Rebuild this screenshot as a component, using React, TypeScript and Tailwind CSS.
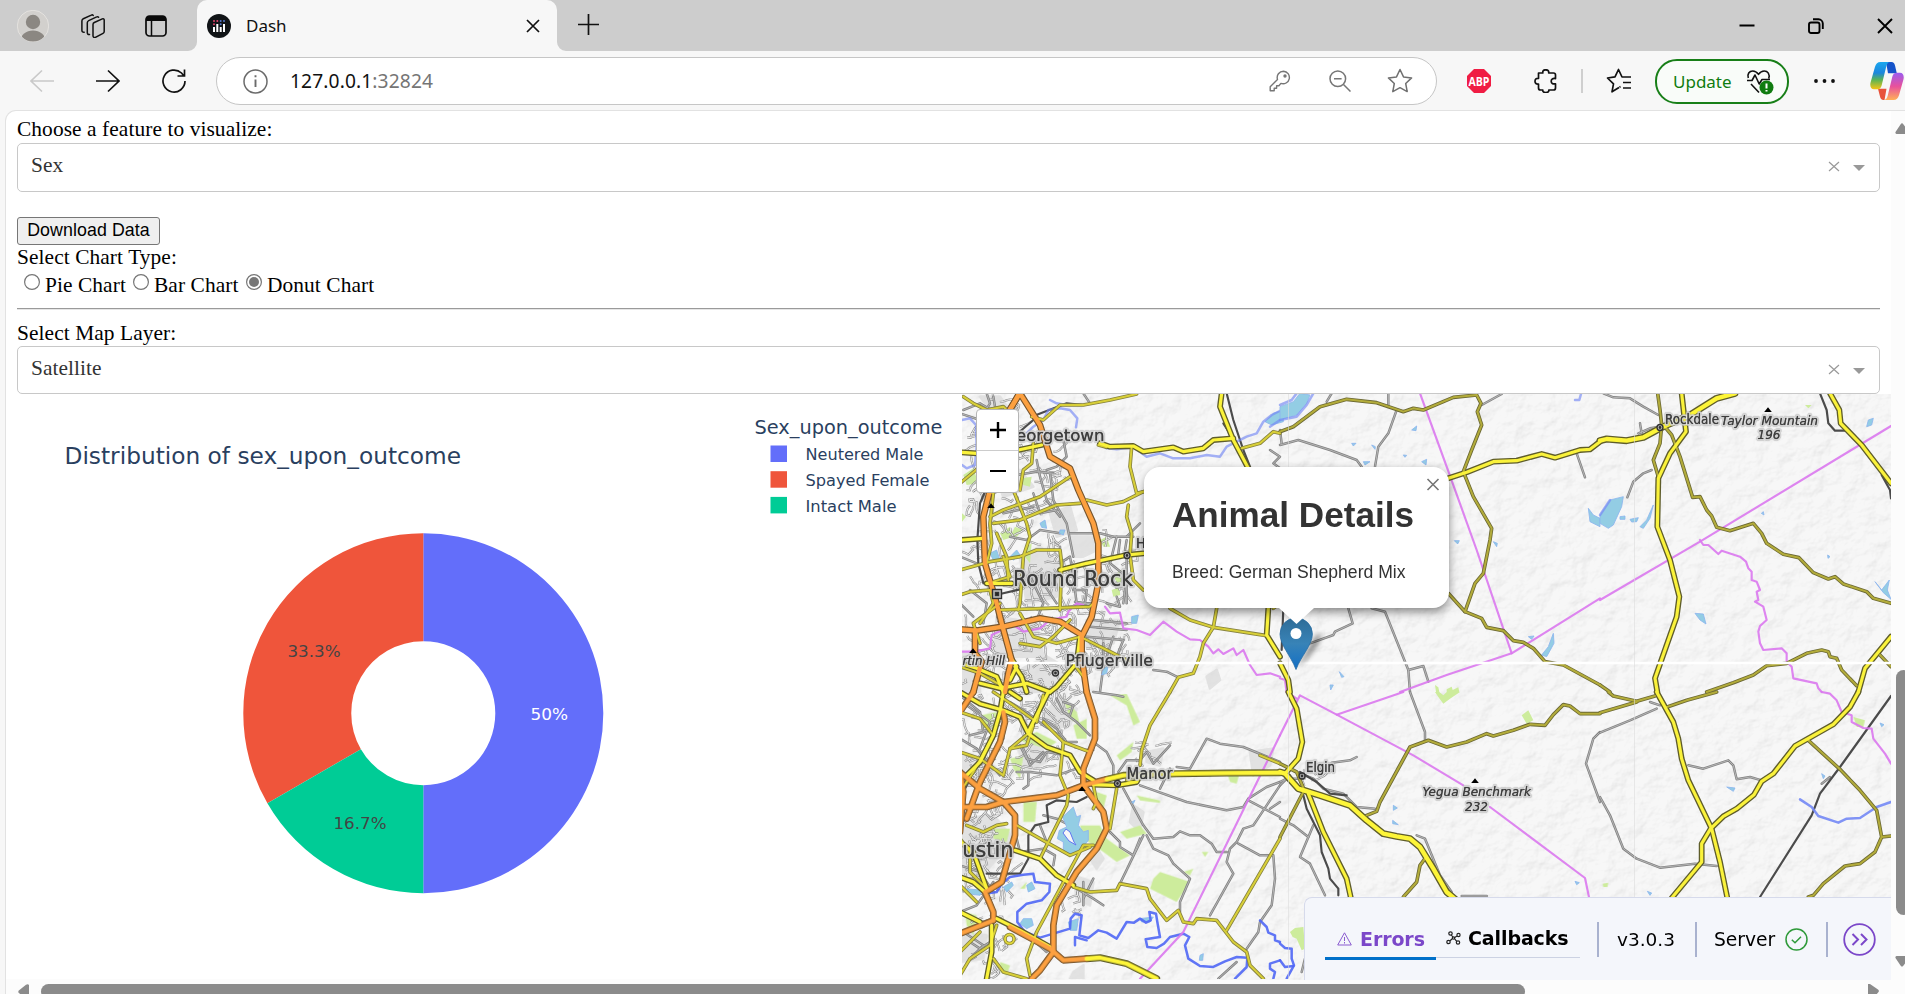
import React from "react";

const SERIF = "font-['Liberation_Serif',serif]";
const VERDANA = "'DejaVu Sans', sans-serif";

/* ---------- browser chrome ---------- */

function TabStrip() {
  return (
    <div className="flex h-[51px] shrink-0 items-center bg-[#cdcdcd]">
      <svg className="ml-[17px] h-8 w-8 shrink-0" viewBox="0 0 32 32">
        <defs>
          <clipPath id="avatar"><circle cx="16" cy="16" r="15.5" /></clipPath>
        </defs>
        <circle cx="16" cy="16" r="15.7" fill="#d2d0cd" stroke="#e4e2df" />
        <g clipPath="url(#avatar)" fill="#8b8782">
          <circle cx="16" cy="12" r="7.2" />
          <ellipse cx="16" cy="31" rx="12.5" ry="10.5" />
        </g>
      </svg>
      <svg className="ml-8 h-6 w-6 shrink-0" viewBox="0 0 24 24" fill="none" stroke="#111" strokeWidth="1.5" strokeLinecap="round" strokeLinejoin="round">
        <path d="M12 10.3c0-.9.5-1.6 1.3-2l8-3.6c1-.4 1.900.1 1.900 1.200v11.500c0 .8-.5 1.500-1.200 1.800l-7.600 4c-1.200.5-2.400-.2-2.400-1.300z" transform="translate(0 .2)" />
        <path d="M8.500 20.500c-1.500.2-2.200-.6-2.200-1.900V8.800c0-1 .5-1.800 1.400-2.200l8-3.700c.8-.4 1.500-.2 1.900.3" />
        <path d="M3.200 18.200C1.500 18.300.9 17.400.9 16.200V7c0-1 .5-1.800 1.400-2.200l8-3.700c.8-.4 1.500-.2 1.900.3" />
      </svg>
      <svg className="ml-10 h-[22px] w-[22px] shrink-0" viewBox="0 0 22 22">
        <rect x="1" y="1" width="20" height="20" rx="3.500" fill="none" stroke="#0a0a0a" strokeWidth="1.700" />
        <path d="M1 6V4a3 3 0 0 1 3-3h14a3 3 0 0 1 3 3v2z" fill="#0a0a0a" />
        <path d="M6.500 5v16" stroke="#0a0a0a" strokeWidth="1.500" />
      </svg>
      <div className="relative ml-[30px] flex h-[51px] w-[360px] shrink-0 items-center rounded-t-[10px] bg-[#f7f7f7]">
        <svg className="absolute bottom-0 -left-[9px] h-[9px] w-[9px]" viewBox="0 0 9 9"><path d="M9 0A9 9 0 0 1 0 9H9z" fill="#f7f7f7" /></svg>
        <svg className="absolute -right-[9px] bottom-0 h-[9px] w-[9px]" viewBox="0 0 9 9"><path d="M0 0A9 9 0 0 0 9 9H0z" fill="#f7f7f7" /></svg>
        <svg className="ml-[10px] h-6 w-6" viewBox="0 0 24 24">
          <circle cx="12" cy="12" r="12" fill="#111417" />
          <g fill="#fff">
            <rect x="6" y="13" width="2" height="5" /><rect x="9.300" y="10" width="2" height="8" />
            <rect x="12.700" y="13" width="2" height="5" /><rect x="16" y="10" width="2" height="8" />
          </g>
          <g fill="#e5446d"><circle cx="7" cy="7" r="1" /><circle cx="7" cy="10.200" r="1" /><circle cx="10.300" cy="7" r="1" /></g>
          <g fill="#5577c9"><circle cx="13.700" cy="7" r="1" /><circle cx="13.700" cy="10.200" r="1" /><circle cx="17" cy="7" r="1" /></g>
        </svg>
        <span className="ml-[15px] font-['Noto_Sans',sans-serif] text-[17px] text-[#111]">Dash</span>
        <svg className="mr-[17px] ml-auto h-[14px] w-[14px]" viewBox="0 0 14 14" stroke="#111" strokeWidth="1.700"><path d="M1 1l12 12M13 1L1 13" /></svg>
      </div>
      <svg className="-mt-[2px] ml-[21px] h-[21px] w-[21px]" viewBox="0 0 21 21" stroke="#111" strokeWidth="1.700"><path d="M10.500 0v21M0 10.500h21" /></svg>
      <div className="mr-[12px] ml-auto flex items-center gap-[53px]">
        <svg className="h-4 w-4" viewBox="0 0 16 16"><path d="M.5 7.500h15" stroke="#000" strokeWidth="2" /></svg>
        <svg className="h-4 w-4" viewBox="0 0 16 16" fill="none" stroke="#000" strokeWidth="1.900"><rect x="1" y="4.500" width="10.500" height="10.500" rx="2" /><path d="M5 1.300h5.500a4.300 4.300 0 0 1 4.300 4.300V11" /></svg>
        <svg className="h-4 w-4" viewBox="0 0 16 16" stroke="#000" strokeWidth="1.900"><path d="M1 1l14 14M15 1L1 15" /></svg>
      </div>
    </div>
  );
}

function Toolbar() {
  return (
    <div className="flex h-[60px] shrink-0 items-center bg-[#f7f7f7]">
      <svg className="ml-[30px] h-6 w-6 shrink-0" viewBox="0 0 24 24" fill="none" stroke="#c9c9c9" strokeWidth="1.600"><path d="M24 12H1M12 1.500L1 12l11 10.500" /></svg>
      <svg className="ml-[42px] h-6 w-6 shrink-0" viewBox="0 0 24 24" fill="none" stroke="#111" strokeWidth="1.700"><path d="M0 12h23M12 1.500L23 12 12 22.500" /></svg>
      <svg className="ml-[42px] h-6 w-6 shrink-0" viewBox="0 0 24 24" fill="none" stroke="#111" strokeWidth="1.700"><path d="M23 12A11 11 0 1 1 19.500 4l2.500 3M22.500.5V7H15.500" /></svg>
      <div className="ml-[30px] flex h-12 w-[1221px] shrink-0 items-center rounded-full border border-[#c6c6c6] bg-white">
        <svg className="ml-[26px] h-[25px] w-[25px]" viewBox="0 0 25 25" fill="none" stroke="#6b6b6b" strokeWidth="1.500"><circle cx="12.500" cy="12.500" r="11.500" /><path d="M12.500 10.500V18M12.500 6.300v2" strokeWidth="1.900" /></svg>
        <div className="mt-[1px] ml-[22px] font-['Noto_Sans',sans-serif] text-[19.200px] tracking-[0.120px] text-[#757575]"><span className="text-[#111]">127.0.0.1</span>:32824</div>
        <svg className="mr-[38px] ml-auto h-[22px] w-[22px]" viewBox="0 0 22 22" fill="none" stroke="#767676" strokeWidth="1.400" strokeLinejoin="round"><path d="M14.500 1.200a6.300 6.300 0 0 0-6 8.200L1.200 16.700v4.100h4v-2.500h2.400v-2.500h2.300l2-2.400a6.300 6.300 0 1 0 2.600-12.200z" /><circle cx="16" cy="6" r="1" fill="#767676" /></svg>
        <svg className="mr-[36px] h-[22px] w-[22px]" viewBox="0 0 22 22" fill="none" stroke="#767676" strokeWidth="1.500"><circle cx="8.800" cy="8.800" r="7.800" /><path d="M14.500 14.500l7 7M5 8.800h7.600" /></svg>
        <svg className="mr-[23px] h-[26px] w-[26px]" viewBox="0 0 26 26" fill="none" stroke="#707070" strokeWidth="1.500" strokeLinejoin="round"><path d="M13 1.500l3.500 7.400 8.100 1-5.900 5.600 1.500 8.100L13 19.700l-7.200 3.900 1.500-8.100L1.400 9.900l8.100-1z" /></svg>
      </div>
      <svg className="ml-[30px] h-6 w-6 shrink-0" viewBox="0 0 24 24"><path d="M7 0h10l7 7v10l-7 7H7l-7-7V7z" fill="#f01d44" /><text x="12" y="16.500" fontSize="12.500" fontWeight="700" fill="#fff" textAnchor="middle" textLength="21" lengthAdjust="spacingAndGlyphs" fontFamily="Open Sans, sans-serif">ABP</text></svg>
      <svg className="ml-[43px] h-6 w-6 shrink-0" viewBox="0 0 24 24" fill="none" stroke="#111" strokeWidth="1.700" strokeLinejoin="round"><path d="M4.500 4h4.300c-.3-2 .7-3.200 2.900-3.200S15 2 14.700 4h4.800a2 2 0 0 1 2 2v3.600c-2.800-.5-4.300.5-4.300 2.600s1.500 3.100 4.300 2.600V19a2 2 0 0 1-2 2h-4.700c.2 1.700-.9 2.600-3 2.600S8.600 22.700 8.800 21H6.500a2 2 0 0 1-2-2v-4C2.300 15.300 1 14.300 1 12.200s1.300-3.100 3.500-2.800z" /></svg>
      <div className="ml-[23px] h-6 w-[2px] bg-[#cfcfcf]" />
      <svg className="ml-[23px] h-[26px] w-[26px] shrink-0" viewBox="0 0 26 26" fill="none" stroke="#111" strokeWidth="1.700" strokeLinejoin="round"><path d="M13 19.500l-7 4.300 1.500-8L1.500 10l7.500-1.200L12.500 1.500 16 9h9M17 14.500h8M17 20h8M13.500 19.200l1-.6" /></svg>
      <div className="mt-[1px] ml-[23px] flex h-[45px] w-[134px] shrink-0 items-center rounded-[22px] border-2 border-[#187f18] bg-[#f9fcf9]">
        <span className="ml-4 w-[58px] font-['Noto_Sans',sans-serif] text-[17px] text-[#107c10]">Update</span>
        <svg className="ml-[15px] h-[26px] w-[28px] shrink-0" viewBox="0 0 28 26" fill="none" stroke="#111" strokeWidth="1.600" strokeLinejoin="round"><path d="M2.300 9C1 5 3.200 2 6.800 2c2.800 0 4.300 1.500 5.700 3.400C13.900 3.500 15.400 2 18.200 2c3.600 0 5.900 3 4.500 7.500M1 11.500h5l3-5.500 4.200 9 2.800-4.500h8M5 15l8 8.500" /><circle cx="20.500" cy="18.500" r="7" fill="#107c10" stroke="none" /><path d="M20.500 14.500v5M20.500 21v1.600" stroke="#fff" strokeWidth="2" /></svg>
      </div>
      <svg className="ml-6 h-[6px] w-[23px] shrink-0" viewBox="0 0 23 6" fill="#111"><circle cx="3" cy="3" r="1.900" /><circle cx="11.500" cy="3" r="1.900" /><circle cx="20" cy="3" r="1.900" /></svg>
      <svg className="ml-[34px] h-[38px] w-[34px] shrink-0" viewBox="0 0 34 32" preserveAspectRatio="none">
        <defs>
          <linearGradient id="cpA" x1="0" y1="0" x2="0" y2="1"><stop offset="0" stopColor="#1aa7ee" /><stop offset=".4" stopColor="#1b86dd" /><stop offset=".65" stopColor="#59b455" /><stop offset="1" stopColor="#f7c414" /></linearGradient>
          <linearGradient id="cpB" x1="0" y1="0" x2="0" y2="1"><stop offset="0" stopColor="#9a5cf0" /><stop offset=".5" stopColor="#e8519c" /><stop offset="1" stopColor="#ffb057" /></linearGradient>
        </defs>
        <path d="M16 0h5.500c2 0 3 1.200 3.500 3l1.800 6.500H18z" fill="#1553c9" />
        <path d="M8 22.500h8.500l-2 9.500h-1c-2 0-3-1.200-3.500-3z" fill="#e8533b" />
        <path d="M10.500 0H20c-2 0-3 1.500-3.700 3.500l-4.600 16c-.7 2.300-2 3.500-4.500 3.500H4C1 23-.3 20.500.5 17.500L5 4C6 1.300 7.500 0 10.500 0z" fill="url(#cpA)" />
        <path d="M23.500 32H14c2 0 3-1.500 3.700-3.500l4.600-16C23 10.200 24.300 9 26.800 9H30c3 0 4.300 2.500 3.500 5.500L29 28c-1 2.700-2.500 4-5.500 4z" fill="url(#cpB)" />
      </svg>
    </div>
  );
}

/* ---------- form controls ---------- */

function Dropdown({ value, tall }: { value: string; tall?: boolean }) {
  return (
    <div className={`flex w-[1863px] items-start rounded-[5px] border border-[#c8c8c8] bg-white ${tall ? "h-[49px]" : "h-12"}`}>
      <span className="mt-[9px] ml-[13px] text-[21.400px] leading-6 tracking-[0.050px] text-[#333]">{value}</span>
      <svg className="mt-[17px] mr-[13px] ml-auto h-3 w-3" viewBox="0 0 12 12" stroke="#999" strokeWidth="1.200"><path d="M1 1l10 9M11 1l-10 9" /></svg>
      <svg className="mt-[21px] mr-[14px] h-[6px] w-3" viewBox="0 0 12 6"><path d="M0 0h12L6 6z" fill="#999" /></svg>
    </div>
  );
}

function Radio({ label, checked }: { label: string; checked?: boolean }) {
  return (
    <label className="flex items-start">
      <svg className="mt-[1px] mr-[5px] h-4 w-4" viewBox="0 0 16 16"><circle cx="8" cy="8" r="7.400" fill="#fff" stroke="#767676" strokeWidth="1.200" />{checked && <circle cx="8" cy="8" r="5" fill="#767676" />}</svg>
      {label}
    </label>
  );
}

/* ---------- donut chart ---------- */

function Chart() {
  const legend = [
    { name: "Neutered Male", fill: "#636efa", w: 118 },
    { name: "Spayed Female", fill: "#ef553b", w: 124 },
    { name: "Intact Male", fill: "#00cc96", w: 91 },
  ];
  return (
    <svg className="h-[585px] w-[945px] shrink-0" viewBox="17 394 945 585" fontFamily={VERDANA}>
      <text x="64.500" y="463.500" fontSize="22.700" fill="#2a3f5f" textLength="396.500" lengthAdjust="spacingAndGlyphs">Distribution of sex_upon_outcome</text>
      <text x="754.500" y="433.500" fontSize="18.700" fill="#2a3f5f" textLength="188" lengthAdjust="spacingAndGlyphs">Sex_upon_outcome</text>
      {legend.map((l, i) => (
        <g key={l.name}>
          <rect x="770.500" y={445.5 + i * 25.7} width="16.500" height="16.500" fill={l.fill} />
          <text x="805.500" y={460 + i * 25.8} fontSize="16" fill="#2a3f5f" textLength={l.w} lengthAdjust="spacingAndGlyphs">{l.name}</text>
        </g>
      ))}
      <path d="M423.300 533.200A180 180 0 0 1 423.300 893.200V785.200A72 72 0 0 0 423.300 641.200z" fill="#636efa" />
      <path d="M423.300 533.200A180 180 0 0 0 267.400 803.200L360.900 749.200A72 72 0 0 1 423.300 641.200z" fill="#ef553b" />
      <path d="M267.400 803.200A180 180 0 0 0 423.300 893.200V785.200A72 72 0 0 1 360.900 749.200z" fill="#00cc96" />
      <g fontSize="16">
        <text x="287.500" y="656.500" fill="#444" textLength="53" lengthAdjust="spacingAndGlyphs">33.3%</text>
        <text x="333.500" y="828.500" fill="#444" textLength="53" lengthAdjust="spacingAndGlyphs">16.7%</text>
        <text x="530.500" y="720" fill="#fff" textLength="37.500" lengthAdjust="spacingAndGlyphs">50%</text>
      </g>
    </svg>
  );
}

/* ---------- map ---------- */

type Sheet = { at: [number, number]; green?: string[]; urban?: string[]; water?: string[]; river?: string[]; border?: string[]; street?: string[]; rail?: string[]; olive?: string[]; yellow?: string[]; trunk?: string[]; orange?: string[] };

/* Each sheet covers a 320x302 part of the map, drawn in thirds of a pixel. */
const SHEETS: Sheet[] = [
  {
    at: [960, 390],
    urban: ["180,500 240,470 300,520 290,620 200,640", "330,440 400,440 410,480 370,500 340,500", "100,240 180,240 220,290 130,320", "110,680 230,700 250,800 100,800", "60,20 120,20 170,90 100,70", "380,690 480,690 460,760 380,770", "180,840 260,800 330,840 250,906 180,906", "10,790 60,790 60,906 10,906", "740,860 770,840 780,870 750,895", "270,370 330,350 350,420 290,440"],
    green: ["10,255 40,235 55,280 20,285", "185,265 215,260 210,290 190,285", "120,430 150,410 160,440 130,450", "200,470 215,460 210,520 195,500", "150,440 165,410 190,420 170,440", "460,560 480,540 500,550 480,590", "6,370 18,380 6,395", "320,800 350,815 330,830", "420,450 440,440 450,470 430,470", "455,600 480,590 480,615 460,620"],
    water: ["90,490 110,480 120,510 100,510", "240,400 255,390 260,415 245,412", "915,95 940,70 970,60 970,95 935,105", "515,680 535,675 530,700 515,700", "430,840 445,825 440,850 425,855", "150,500 170,480 180,495 160,510", "300,420 315,420 310,435 298,430"],
    river: ["6,90 30,85 48,105 50,170 45,225 20,235 6,225", "180,150 220,110 250,90 265,60 300,55 330,60 352,85 348,112", "270,30 290,40 320,45", "415,160 440,175 470,178 520,172 560,200 600,190 640,205 690,205 740,195 780,200 800,170 860,140 890,130 910,95 935,75 965,60", "930,110 960,90"],
    border: ["0,785 45,785 90,775 95,735 160,705 190,725 240,715 270,690 320,680 325,665 350,640 370,645", "435,650 450,670 480,668 490,715 530,720 570,735 610,695 650,725 690,748 720,750 745,770 760,790 775,778 790,792 820,775 830,795 850,780 870,825 890,855 930,850 960,860"],
    rail: ["220,90 150,150 90,270 60,340 52,450 55,520 70,580", "800,10 820,90 850,180 872,235", "215,80 320,40 370,45", "790,100 835,170", "120,612 180,598"],
    street: ["0,70 60,90 90,40 80,10", "10,60 60,40 110,70 160,60", "100,20 110,80 150,100", "370,10 390,40", "310,150 320,200 290,230 260,240", "230,210 240,260 260,330 300,380", "270,250 280,330 320,400 340,500", "330,430 420,430 460,440 520,440", "300,470 300,520 330,500 340,560", "470,440 450,520 500,560 490,640", "500,500 500,640", "930,180 960,200 940,220 960,235", "390,710 500,720", "380,740 490,750 470,800", "400,690 500,700", "430,760 430,850", "460,740 430,830 420,906", "580,840 620,845 650,860", "0,500 50,520", "30,600 80,640 70,700", "0,640 40,680", "210,560 250,640 230,690", "250,580 290,640", "340,560 350,640 400,640", "540,400 500,440", "150,440 200,450 240,420 300,430", "220,310 240,370 290,360", "480,450 475,490", "500,450 495,480", "340,600 380,600 375,640 345,635", "440,640 480,650 470,620", "100,250 170,255 230,245 280,250", "130,370 220,350"],
    olive: ["10,20 40,40 80,60 130,50 160,80", "215,80 250,90 300,45 370,45 450,30 530,12", "415,165 440,172", "515,170 510,230 530,310 550,305", "380,330 440,345 490,335 550,305", "505,345 500,380 515,430 510,495", "510,495 520,570 550,600", "630,655 690,690 760,712 920,737", "770,655 760,712 730,760 720,800 700,850 655,862 630,906", "845,175 900,160 940,125 960,130", "90,380 130,360 240,320 330,260", "100,400 180,390 290,345 360,340", "60,290 100,310 90,400 95,460 80,520", "160,300 200,400 210,440 190,500 180,640 175,660", "220,160 215,220 190,240 180,300", "0,540 90,515 180,500 230,480 300,480 305,520 300,660", "120,660 260,655 390,650 400,640", "60,700 100,640 90,600 30,605 0,615", "180,670 220,740 290,760 360,740 440,780 520,820", "180,760 240,770 280,740 330,690", "940,655 960,640", "0,830 60,850 130,890", "60,760 40,700 120,640", "130,500 150,560 100,575", "340,820 370,860", "110,430 140,500 145,570", "0,280 60,230 130,160"],
    yellow: ["6,187 50,190", "175,180 245,165", "6,450 70,445", "300,540 380,520 500,495 550,490", "80,580 155,580", "360,740 350,820 290,890 270,906", "0,820 50,835 110,860 130,906", "165,830 185,860 200,906", "925,655 920,735 960,800", "785,10 780,50 820,150 865,235", "820,145 760,150 730,175 670,185 640,172 550,185 520,168 450,170 420,160", "150,800 170,830 150,870", "60,880 120,895 200,880 270,906"],
    orange: ["145,65 180,10 240,105 270,200 330,235 355,300 400,400 415,460 415,580 395,680 365,740 365,800 380,906", "150,60 175,15", "90,300 70,380 75,520 110,640 125,700 155,810 145,850 135,906", "0,718 50,722 130,710 240,685 300,695 365,735", "45,720 45,790 65,815 40,906"],
  },
  {
    at: [960, 692],
    urban: ["170,160 240,150 260,210 200,240", "0,180 80,200 120,240 60,260 0,230", "560,180 610,170 600,220 560,210", "0,380 100,370 160,440 60,560 0,540", "340,550 400,570 390,640 350,620", "520,340 550,360 540,420 510,390", "400,450 430,500 410,530 390,500", "870,180 940,170 930,220 880,250", "250,70 300,10 350,50 330,100 280,110", "340,840 370,820 370,860 330,860", "0,720 80,730 70,800 0,810"],
    green: ["450,10 500,5 540,90 520,100 500,40", "470,190 520,150 515,180 480,205", "180,140 230,120 290,150 260,170 190,150", "360,400 420,400 440,440 510,490 470,510 430,480 370,440", "480,420 540,400 560,425 500,440", "580,560 600,540 690,570 650,630 570,590", "190,330 230,330 225,390 190,390", "60,70 110,60 100,130 70,110", "530,310 600,325 600,333 540,325", "100,410 150,410 140,450 100,440", "340,100 380,80 380,140 350,140", "800,240 840,240 830,275 810,270", "725,480 745,480 735,495", "410,300 440,310 430,350 410,330", "150,200 190,190 180,260 160,230", "310,20 350,60 360,100 330,80", "15,660 50,670 40,730 20,700", "180,590 200,570 195,590", "670,540 700,530 690,550", "120,810 150,820 140,850 120,840"],
    water: ["340,345 350,375 362,370 355,400 370,420 385,415 385,445 365,470 335,490 310,475 310,450 292,440 298,415 320,405 308,375", "190,680 215,680 220,700 200,710 180,695", "130,585 155,570 160,580 140,600", "200,580 215,570 225,590 205,600", "325,690 355,680 350,715 330,715", "540,680 580,675 570,690 545,690", "15,590 70,595 60,610 20,605", "720,790 730,785 728,805 718,805", "515,330 525,325 520,335"],
    river: ["75,605 110,600 125,575 150,555 190,548 220,545 225,570 270,575 268,600 245,625 200,635 172,660 172,690 195,720 240,737 330,710 332,680 345,665 365,670 362,695 358,730 385,738 415,715 440,722 470,740 500,690 522,692 540,680 558,692 572,685 568,660 588,665 592,690 600,735 580,738 557,742 562,765 590,768 612,755 630,735 670,725 688,735 675,760 685,800 720,822 760,825 795,808 830,795 862,797 860,825 825,860", "345,760 345,735 380,745", "900,685 920,705 925,722 945,730 945,745 960,750", "960,805 930,815 930,830 945,840 940,860"],
    border: ["960,130 670,720 540,860"],
    rail: ["80,545 180,545 205,500 205,430 225,400 265,390 260,340 290,325 350,330 380,315", "0,240 30,260 10,300"],
    street: ["0,10 60,60 70,120 30,130", "20,40 90,90 60,170", "150,30 200,60 250,100 300,130", "250,80 290,110 320,150 350,150", "180,160 200,200 240,210 260,180 320,190", "190,170 210,220 250,180", "170,240 210,240 290,250 350,230", "205,245 205,280 190,290", "290,20 310,60 350,90 390,130", "310,30 340,40 330,70 310,60", "400,150 440,180 460,220 460,250", "400,0 470,10 490,14", "475,240 500,205 540,205 560,180 580,215 630,160", "650,225 690,230 740,140 780,155 850,165 960,210", "540,280 680,330 800,355 850,345 865,320 920,285 960,270", "490,290 550,400 580,440 640,435 660,418 690,430 720,430 755,455 770,480 800,480", "480,575 550,430", "560,430 580,470 625,490 640,515 690,560 660,630 660,660", "750,670 820,545 800,510 810,470 830,450 850,410 880,400 960,280", "865,325 960,375", "835,455 900,490 940,490 945,560 935,640 900,690 895,720 860,770", "775,860 830,810", "450,420 480,450 480,465 520,490 540,440", "350,590 400,620 430,640", "370,570 370,640", "400,560 370,620", "170,440 180,480 250,470 285,490 280,520", "250,370 290,380 330,400", "240,400 260,450", "0,140 50,170 120,250", "0,660 50,640 100,570", "10,720 70,760 30,800", "600,290 630,230", "0,520 60,540 100,600", "220,745 260,780", "30,750 60,770 90,750", "930,350 960,330"],
    olive: ["630,0 570,100 545,175 540,220", "470,290 450,410", "0,60 60,80 100,130 40,240 0,300", "0,180 60,200 130,250 150,170 210,120", "150,170 200,160 220,100", "250,90 310,150 390,180", "310,150 300,250 325,310 320,340 240,500", "100,0 160,40 230,90 250,10", "170,400 240,440 330,490 390,465", "400,460 370,460 230,720 200,800 210,850", "340,585 390,600 470,595 480,575 560,590 570,620 620,685 655,655 670,690 700,695 710,680 770,685 820,750 860,780 870,820 910,860", "800,715 960,440", "900,190 960,215", "0,850 30,800 90,760 110,700", "100,800 130,840 200,860", "400,280 410,330 400,350", "20,400 70,420 110,400 140,395", "0,580 50,630", "0,440 30,480 30,540 80,590", "60,720 0,780", "500,265 520,270"],
    yellow: ["0,0 60,35 130,55 180,75 205,125 260,165 330,190 360,240 400,265", "130,0 120,60 100,130 60,210 20,250", "205,120 265,0", "400,278 470,280 530,270 540,250", "165,475 240,500 290,550 340,580", "0,660 60,690", "110,680 180,715 270,765", "0,450 40,480 80,590", "0,555 40,570 75,600", "95,700 95,780 80,860", "150,0 180,20"],
    trunk: ["440,262 490,250 650,245 800,243 960,242", "380,800 420,797 500,815 590,860"],
    orange: ["40,0 0,60", "0,240 60,290 130,330 165,370 165,430 145,500 125,570 85,595", "0,345 80,345 130,330 290,310 370,280 440,262", "380,0 405,80 405,140 370,230 370,280 430,360 440,410 410,470 350,540 290,640 280,700 280,780", "280,780 240,835 215,860", "130,60 135,90 120,150 60,270 20,380", "75,600 100,660 100,685", "0,725 100,685", "150,705 270,770 310,805 380,800", "0,240 10,300 0,420"],
  },
  {
    at: [1280, 390],
    water: ["0,50 40,35 60,10 90,15 80,40 50,75 0,90", "925,355 940,375 960,385 960,410 930,395", "395,120 410,108 408,122", "425,215 440,208 438,225", "820,730 822,760 800,800 785,795 805,770", "523,452 538,452 533,462", "640,455 652,460 650,470", "215,160 228,160 220,168", "250,215 270,215 255,225", "745,740 762,738 755,748", "178,845 192,860 185,862", "150,885 160,885 152,900", "370,195 380,196 375,202", "275,165 286,170 285,178"],
    green: ["465,885 475,892 478,906 468,906", "500,898 515,890 518,900 535,892 538,906 500,906", "395,890 410,882"],
    river: ["0,45 35,30 50,10", "0,90 50,80 80,45 100,10", "885,30 898,30 903,12"],
    border: ["420,10 500,230 590,480 695,790 960,625", "695,790 500,855 360,906", "0,865 15,870 20,906"],
    rail: ["10,655 5,780"],
    street: ["0,165 55,150 150,180 230,210 245,230", "350,60 325,130 295,170 285,230", "325,10 325,45", "140,35 155,10", "605,45 665,12", "890,190 915,262", "205,655 218,700 165,725 160,735 90,760", "275,655 315,665 385,840 390,906", "385,840 430,828 445,875", "0,120 5,160"],
    olive: ["0,125 40,110 120,50 200,28 290,38 370,65 400,55 430,60 520,22 590,15 603,40 592,65 605,105 575,180 550,245 580,320 635,415 630,450 610,550 585,580 555,665", "505,610 555,665 605,685 620,712 670,722 700,752 730,757 760,775 795,815 850,825 960,885"],
    yellow: ["505,265 560,247 640,215 710,212 785,192 825,203 900,180 930,178 960,155", "0,820 25,870 30,906"],
  },
  {
    at: [1280, 692],
    water: ["340,340 352,348 340,355", "338,385 355,398 338,395", "885,568 898,572 890,578"],
    green: ["465,0 478,0 490,10 500,0 540,0 510,20 490,35 475,15", "725,70 745,55 760,85 740,95", "30,720 45,708 70,705 75,770 65,775 50,740 38,735"],
    river: ["0,755 15,768 35,770 35,800 42,820 20,860", "0,805 15,825 40,822"],
    border: ["0,130 60,10 170,68 400,190 550,280", "170,68 370,0", "630,345 915,558 928,620", "20,0 50,20"],
    rail: ["70,310 80,350 120,430 125,480 145,530 150,560 175,590 175,610", "60,240 110,270 150,305 200,310"],
    street: ["390,0 435,120 435,145", "155,212 210,205 230,195", "0,380 40,400 85,435", "100,400 60,495 90,515 135,610", "960,120 940,140 918,215 960,330", "50,240 100,260 130,290 190,305 230,345 285,350", "410,430 435,440 480,550 515,600", "0,280 30,250", "0,270 20,260 70,260", "545,612 620,612", "75,800 65,840"],
    olive: ["260,370 290,358 300,330 390,165 445,145 500,165 560,150 620,125 640,132 700,115 750,97 795,100 820,68 850,38 870,42 900,65 960,65", "70,300 0,435", "435,500 420,520 410,570 370,615", "0,215 50,240 75,300"],
    yellow: ["25,0 50,50 67,150 55,200 15,245", "85,305 130,420 200,560 212,615"],
    trunk: ["0,240 15,245 55,290 120,310 210,340 260,385 310,425 350,433 390,440 420,465 460,530 500,600 530,625"],
  },
  {
    at: [1600, 390],
    water: ["30,330 70,320 65,350 40,405 25,415 0,400 0,375", "160,345 150,385 130,415 120,410 140,390", "60,380 75,378 75,388 60,388", "90,388 115,383 110,395 95,396", "800,110 805,90 820,85 815,105", "285,670 310,672 318,702 300,690", "825,575 845,600 868,570 862,600 873,628 850,608", "490,365 492,375 484,370", "683,495 690,500 684,505"],
    river: ["0,375 30,330"],
    green: ["615,45 635,45 625,55"],
    border: ["0,630 300,455 873,108", "300,450 310,465 325,465 355,492 365,482 420,500 438,515 445,535 455,545 455,570 470,575 480,600 470,605 475,630 465,635 490,650 500,690 480,708 475,725 480,760 490,780 545,775 560,790 560,815 575,830 580,865 650,880 655,895 665,906"],
    rail: ["660,10 680,60 685,100 705,122 735,122", "845,255 870,300 873,325"],
    street: ["10,10 40,22 90,25 130,50 175,75", "82,322 100,275 130,250 155,240", "115,130 150,115 180,110", "120,100 125,130"],
    olive: ["173,10 180,60 185,105 180,160 160,210 175,260", "190,105 215,135 240,200 278,322 300,320 320,360 335,378 350,412 390,422 460,400 485,430 500,460 550,493 597,503 640,548 685,567 705,560 730,582 800,605 820,625 873,640", "320,906 400,878 460,855 500,827 560,820 620,790 665,780 685,785 690,800 710,805 725,840 770,887", "0,885 30,906", "840,795 873,830"],
    yellow: ["245,10 258,125 210,190 175,265 172,410 210,510 238,620 230,680 165,865 172,906", "690,10 718,60 722,100 785,165 873,280", "873,740 795,835 775,906"],
    trunk: ["0,152 20,147 80,152 130,142 190,110 270,75 350,25 405,10"],
  },
  {
    at: [1600, 692],
    water: ["380,285 405,288 400,298", "665,245 675,252 670,260", "840,93 852,98 845,104", "142,598 155,603 150,610"],
    green: ["8,575 25,572 22,585 10,585", "760,75 795,85 790,105 770,105"],
    river: ["600,322 635,345 655,372 715,392 740,380 780,378 830,345 873,330"],
    border: ["665,0 690,5 710,25 725,60 755,70 755,90 790,108 815,110 820,140 855,185 873,215"],
    rail: ["873,12 720,225 660,305 635,370 480,615"],
    street: ["0,122 90,85 170,50", "265,220 310,230 385,205 400,220 410,262 450,255 485,265", "0,315 30,370 70,470 110,500 180,527 285,515 350,522", "150,30 180,40", "665,275 690,255"],
    olive: ["25,0 40,12 110,28 165,12", "0,62 110,30", "195,47 260,25 350,0", "625,145 720,232 780,295 830,355 845,435 825,480 780,515 735,522 670,575 640,610 625,615", "845,435 873,432"],
    yellow: ["170,0 220,90 235,140 245,200 265,265 335,410 360,510 382,618", "775,0 750,45 700,97 585,162 520,245 485,268 462,308 410,350 370,373 332,410 305,455 305,510 215,618"],
  },
];

function Lines({ d, color, width, opacity }: { d?: string[]; color: string; width: number; opacity?: number }) {
  return <>{(d ?? []).map((p, i) => <polyline key={i} points={p} fill="none" stroke={color} strokeWidth={width} strokeLinejoin="round" strokeLinecap="round" opacity={opacity} />)}</>;
}

/* Fine residential street mesh inside the built-up west side. */
function cityStreets(): string[] {
  let s = 7;
  const rnd = () => ((s = (s * 16807) % 2147483647) / 2147483647);
  const zones: [number, number, number, number, number][] = [
    [964, 396, 60, 60, 24], [985, 450, 80, 130, 60], [964, 470, 22, 110, 12], [985, 570, 100, 50, 46], [1085, 615, 40, 55, 24],
    [964, 620, 110, 110, 120], [964, 720, 40, 110, 56], [964, 830, 40, 65, 42], [1015, 740, 60, 40, 14], [964, 915, 40, 60, 14], [1085, 530, 40, 70, 20],
    [1130, 745, 40, 20, 6], [1296, 768, 25, 20, 6], [1060, 890, 30, 25, 5],
  ];
  const out: string[] = [];
  for (const [x, y, w, h, n] of zones) {
    for (let i = 0; i < n; i++) {
      let px = x + rnd() * w;
      let py = y + rnd() * h;
      let a = -0.25 + (rnd() < 0.5 ? 0 : Math.PI / 2) + (rnd() - 0.5) * 0.9;
      const pts = [`${px.toFixed(1)},${py.toFixed(1)}`];
      const steps = 3 + Math.floor(rnd() * 5);
      for (let k = 0; k < steps; k++) {
        px += Math.cos(a) * 3.4;
        py += Math.sin(a) * 3.4;
        a += rnd() < 0.2 ? (rnd() < 0.5 ? 1.4 : -1.4) : (rnd() - 0.5) * 0.8;
        pts.push(`${px.toFixed(1)},${py.toFixed(1)}`);
      }
      out.push(pts.join(" "));
    }
  }
  return out;
}
const CITY = cityStreets();

const LABELS: { t: string; x: number; y: number; w: number; s: number; i?: boolean }[] = [
  { t: "Georgetown", x: 1003, y: 440.5, w: 101.5, s: 16.5 },
  { t: "Round Rock", x: 1013, y: 586, w: 120, s: 22 },
  { t: "Pflugerville", x: 1065.5, y: 666, w: 87.5, s: 16.5 },
  { t: "Martin Hill", x: 945, y: 664.5, w: 60, s: 13, i: true },
  { t: "Manor", x: 1126.5, y: 779, w: 46, s: 15.5 },
  { t: "Austin", x: 948, y: 857, w: 65.5, s: 22 },
  { t: "Hutto", x: 1136, y: 548, w: 36, s: 14 },
  { t: "Elgin", x: 1306, y: 771.5, w: 29, s: 14 },
  { t: "Yegua Benchmark", x: 1422.5, y: 796, w: 108.5, s: 13, i: true },
  { t: "232", x: 1465, y: 810.5, w: 23, s: 13, i: true },
  { t: "Rockdale", x: 1665, y: 423.5, w: 54, s: 13.5 },
  { t: "Taylor Mountain", x: 1721, y: 425, w: 97, s: 13, i: true },
  { t: "196", x: 1757.5, y: 439, w: 23, s: 13, i: true },
];

function MapDrawing() {
  const sheets = (draw: (s: Sheet) => React.ReactNode) =>
    SHEETS.map((s, i) => <g key={i} transform={`translate(${s.at[0]} ${s.at[1]}) scale(.33333)`}>{draw(s)}</g>);
  return (
    <svg className="block h-[586px] w-[929px]" viewBox="962 394 929 586">
      <defs>
        <filter id="relief" x="0" y="0" width="100%" height="100%">
          <feTurbulence type="fractalNoise" baseFrequency="0.05 0.06" numOctaves="4" seed="5" />
          <feDiffuseLighting surfaceScale="2.200" diffuseConstant="1.120" lightingColor="#ffffff"><feDistantLight azimuth="225" elevation="60" /></feDiffuseLighting>
        </filter>
        <filter id="tile" x="0" y="0" width="100%" height="100%"><feGaussianBlur stdDeviation=".55" /></filter>
        <filter id="shade" x="-20%" y="-20%" width="140%" height="140%"><feGaussianBlur stdDeviation="5" /></filter>
        <filter id="soft"><feGaussianBlur stdDeviation="2.500" /></filter>
        <linearGradient id="pin" x1="0" y1="0" x2="0" y2="1"><stop offset="0" stopColor="#2e6c97" /><stop offset=".5" stopColor="#3883b7" /><stop offset="1" stopColor="#126fc6" /></linearGradient>
      </defs>
      <rect x="962" y="394" width="929" height="586" fill="#f2f2f2" />
      <rect x="962" y="394" width="929" height="586" filter="url(#relief)" opacity=".42" />
      <g filter="url(#tile)">
        {sheets((s) => (
          <>
            {(s.urban ?? []).map((p, i) => <polygon key={i} points={p} fill="#dcdcdc" stroke="#dcdcdc" strokeWidth="8" strokeLinejoin="round" opacity=".8" />)}
            {(s.green ?? []).map((p, i) => <polygon key={i} points={p} fill="#cdec9c" />)}
          </>
        ))}
        {CITY.map((p, i) => <polyline key={i} points={p} fill="none" stroke="#7d7d7d" strokeWidth="2.200" opacity=".8" />)}
        {CITY.map((p, i) => <polyline key={i} points={p} fill="none" stroke="#ececec" strokeWidth="1" />)}
        {sheets((s) => (
          <>
            <Lines d={s.street} color="#838383" width={7.5} />
            <Lines d={s.street} color="#b5b5b5" width={3} />
            <Lines d={s.rail} color="#4c4c4c" width={6.5} />
            {(s.water ?? []).map((p, i) => <polygon key={i} points={p} fill="#93cde4" stroke="#8bb4ee" strokeWidth="2.500" />)}
            <Lines d={s.river} color={s.at[1] === 692 && s.at[0] < 1600 ? "#5066f5" : "#7488f5"} width={7.5} opacity={s.at[1] === 390 ? 0.65 : 0.9} />
            <Lines d={s.border} color="#da78ee" width={6.5} opacity={0.9} />
          </>
        ))}
        <polygon points="1066,829 1070,832 1074,842 1076,845 1069,841 1063,833" fill="#f7f7f7" stroke="#6076f0" />
        {sheets((s) => (
          <>
            <Lines d={s.olive} color={s.at[0] === 960 ? "#85813f" : "#6b6834"} width={11} />
            <Lines d={s.yellow} color="#5f5d2b" width={17.5} />
            <Lines d={s.trunk} color="#5f5d2b" width={21} />
            <Lines d={s.orange} color="#77552e" width={20} />
          </>
        ))}
        {sheets((s) => (
          <>
            <Lines d={s.olive} color={s.at[0] === 960 ? "#d8cf38" : "#b3ac3a"} width={6} />
            <Lines d={s.yellow} color="#faf23a" width={9.5} />
          </>
        ))}
        {sheets((s) => (
          <>
            <Lines d={s.orange} color="#fca040" width={13} />
            <Lines d={s.trunk} color="#fdf538" width={13} />
          </>
        ))}
        <circle cx="1009.500" cy="939" r="4.500" fill="none" stroke="#8b8735" strokeWidth="3.500" />
        <circle cx="1009.500" cy="939" r="4.500" fill="none" stroke="#e2d83a" strokeWidth="1.800" />
        <path d="M1004 663H1900" stroke="#fff" strokeWidth="2.400" />
        <g fill="#bbb" stroke="#333" strokeWidth="1.400">
          <rect x="992.500" y="589.500" width="9" height="9" /><rect x="995.500" y="592.500" width="3" height="3" fill="#222" />
          {[[1127, 555.5], [1055.5, 673], [1117.5, 783.5], [1302, 776], [1660, 427.500]].map(([x, y]) => <g key={x}><circle cx={x} cy={y} r="3" /><circle cx={x} cy={y} r=".7" /></g>)}
        </g>
        {[[991, 508], [1082, 791], [1475, 783], [1768, 412], [973, 653]].map(([x, y]) => <path key={x} d={`M${x - 3.8} ${y}l3.800-4.800 3.800 4.800z`} fill="#000" />)}
      </g>
      <g fontFamily={VERDANA} fill="#3d3d3d" stroke="#ffffff" strokeOpacity=".7" strokeWidth="3.400" strokeLinejoin="round" paintOrder="stroke">
        {LABELS.map((l) => (
          <text key={l.t} x={l.x} y={l.y} fontSize={l.s} fontStyle={l.i ? "italic" : "normal"} textLength={l.w} lengthAdjust="spacingAndGlyphs" style={{ textShadow: "0 0 .8px #3d3d3d" }}>{l.t}</text>
        ))}
      </g>
      <path d="M1288.500 394V979M1634.500 394V979" stroke="#dcdcdc" strokeWidth=".6" />
      <path d="M1297 668L1314 638Q1325 628 1320 640Q1316 652 1297 668z" fill="#000" opacity=".4" filter="url(#soft)" />
      <path d="M1296 669.500C1291 656 1280 645 1280 634a16.200 16.200 0 0 1 32.400 0C1312.400 645 1301 656 1296 669.500z" fill="url(#pin)" stroke="#2a6da3" strokeWidth=".8" />
      <circle cx="1296" cy="633.500" r="5.500" fill="#fff" />
      <rect x="1145" y="471" width="304" height="141" rx="16" fill="#000" opacity=".45" filter="url(#shade)" />
      <path d="M1160 467H1433a16 16 0 0 1 16 16V592a16 16 0 0 1-16 16H1314L1296.500 624 1279 608H1160a16 16 0 0 1-16-16V483a16 16 0 0 1 16-16z" fill="#fff" />
      <g fontFamily="'Liberation Sans', sans-serif" fill="#333">
        <text x="1172" y="527" fontSize="35" fontWeight="700" textLength="242" lengthAdjust="spacingAndGlyphs">Animal Details</text>
        <text x="1172" y="577.500" fontSize="17.500" textLength="233.500" lengthAdjust="spacingAndGlyphs">Breed: German Shepherd Mix</text>
      </g>
      <path d="M1427.500 479l11 11M1438.500 479l-11 11" stroke="#757575" strokeWidth="1.600" />
    </svg>
  );
}

function DebugPanel() {
  return (
    <div className="absolute right-0 bottom-0 flex h-[83px] w-[587px] items-start rounded-tl-lg border-t border-l border-[#d6daeb] bg-[#f4f6fb] font-['DejaVu_Sans',sans-serif] text-[18.500px] text-black">
      <div className="mt-[20px] ml-5 flex h-[42px] w-[111px] items-center border-b-[3px] border-[#0070c9] pt-[2px] font-bold text-[#7b47c9]">
        <svg className="mr-[8px] ml-3 h-[14px] w-[15px]" viewBox="0 0 15 14" fill="none" stroke="#8a5bd0" strokeWidth="1"><path d="M7.500.8L14.300 13H.7z" strokeLinejoin="round" /><path d="M7.500 5v4M7.500 10v1.500" /></svg>
        <span className="w-[67px] text-[19px] tracking-[-0.100px]">Errors</span>
      </div>
      <div className="mt-[20px] flex h-[40px] w-[144px] items-center border-b border-[#ccd2e3] pt-[1px] font-bold">
        <svg className="mr-[7px] ml-[10px] h-[14px] w-[15px]" viewBox="0 0 15 14" fill="none" stroke="#222" strokeWidth="1.200"><circle cx="4.500" cy="2.500" r="1.700" /><circle cx="12.500" cy="4" r="1.600" /><circle cx="2.500" cy="11" r="1.700" /><circle cx="12" cy="11.500" r="1.700" /><circle cx="7.500" cy="7" r="1.200" /><path d="M5.300 4l1.500 2M8.700 6.500L11 5M6.300 7.800L4 9.800M8.700 7.800l2 2.500" /></svg>
        <span className="text-[19px] tracking-[-0.100px]">Callbacks</span>
      </div>
      <div className="mt-[24px] ml-[17px] flex h-[35px] items-center">
        <div className="h-[35px] w-[2px] bg-[#a9b2cf]" />
        <span className="ml-[18px] w-[61px]">v3.0.3</span>
        <div className="ml-[17px] h-[35px] w-[2px] bg-[#a9b2cf]" />
        <span className="ml-[17px] w-[63px] text-[18.700px]">Server</span>
        <svg className="ml-[8px] h-[23px] w-[23px]" viewBox="0 0 23 23" fill="none" stroke="#2f9a3a" strokeWidth="1.500"><circle cx="11.500" cy="11.500" r="10.500" /><path d="M6.800 11.800l3.200 3 6-6" /></svg>
        <div className="ml-[18px] h-[35px] w-[2px] bg-[#a9b2cf]" />
        <svg className="ml-[15px] h-[33px] w-[33px]" viewBox="0 0 33 33" fill="none" stroke="#7b47c9" strokeWidth="1.800"><circle cx="16.500" cy="16.500" r="15.300" /><path d="M9.500 11l5.500 5.500L9.500 22M18 11l5.500 5.500L18 22" strokeWidth="2" /></svg>
      </div>
    </div>
  );
}

function MapPanel() {
  return (
    <div className="relative h-[586px] w-[929px] shrink-0 overflow-hidden">
      <MapDrawing />
      <div className="absolute top-[15px] left-[14px] flex h-[84px] w-[43px] flex-col rounded-[4px] border border-[#b5b5b5] bg-white">
        <div className="flex h-[41px] items-center justify-center border-b border-[#ccc] pl-[1px]">
          <svg className="h-4 w-4" viewBox="0 0 16 16" stroke="#000" strokeWidth="2.400"><path d="M8 0v16M0 8h16" /></svg>
        </div>
        <div className="flex flex-1 items-center justify-center pb-[1px] pl-[1px]">
          <svg className="h-4 w-4" viewBox="0 0 16 16" stroke="#000" strokeWidth="2"><path d="M0 8h16" /></svg>
        </div>
      </div>
      <DebugPanel />
    </div>
  );
}

/* ---------- page ---------- */

export default function App() {
  return (
    <div className="flex h-[994px] w-[1905px] flex-col overflow-hidden bg-[#f7f7f7]">
      <TabStrip />
      <Toolbar />
      <div className={`-mt-[1px] ml-[5px] flex h-[884px] shrink-0 overflow-hidden rounded-tl-[11px] border-t border-l border-[#e2e2e2] bg-white text-[21.400px] leading-6 tracking-[0.080px] text-black ${SERIF}`}>
        <div className="flex w-[1885px] shrink-0 flex-col">
          <div className="flex h-[868px] flex-col pl-[11px]">
            <div className="h-8 shrink-0 pt-[6px]">Choose a feature to visualize:</div>
            <Dropdown value="Sex" tall />
            <button className="mt-[25px] flex h-7 w-[143px] shrink-0 items-center justify-center rounded-[3px] border border-[#767676] bg-[#efefef] pb-[3px] font-['Liberation_Sans',sans-serif] text-[17.800px]">Download Data</button>
            <div className="h-6">Select Chart Type:</div>
            <div className="mt-1 flex h-6 pl-[7px]">
              <div className="w-[109px]"><Radio label="Pie Chart" /></div>
              <div className="w-[113px]"><Radio label="Bar Chart" /></div>
              <Radio label="Donut Chart" checked />
            </div>
            <div className="mt-[11px] h-[2px] w-[1863px] border-t border-b border-t-[#9a9a9a] border-b-[#e6e6e6]" />
            <div className="mt-[11px] mb-[1px] h-6">Select Map Layer:</div>
            <Dropdown value="Satellite" />
            <div className="flex h-[585px] shrink-0 tracking-normal">
              <Chart />
              <MapPanel />
            </div>
          </div>
          <div className="flex h-[15px] shrink-0 items-start bg-[#fcfcfc] pt-[5px]">
            <svg className="ml-[12px] h-[11px] w-[11px]" viewBox="0 0 11 11"><path d="M11 1v10H3L.5 8.500Q0 7.500.8 6.500L8 .8Q10-.5 11 1z" fill="#8b8b8b" /></svg>
            <div className="ml-[12px] h-[15px] w-[1484px] rounded-full bg-[#8b8b8b]" />
            <svg className="ml-[343px] h-[11px] w-[11px]" viewBox="0 0 11 11"><path d="M0 0h2l8 5.500q1.500 1 .5 2.500L8 11H0z" fill="#8b8b8b" /></svg>
          </div>
        </div>
        <div className="flex w-[20px] shrink-0 flex-col bg-[#fcfcfc] pl-[4px]">
          <svg className="mt-[12px] h-[11px] w-[14px]" viewBox="0 0 14 11"><path d="M1.500 11Q0 10.500.5 9L5.500 1.500Q7-.8 8.500 1.500L14 9v2z" fill="#8b8b8b" /></svg>
          <div className="mt-[536px] ml-[1px] h-[245px] w-[15px] shrink-0 rounded-full bg-[#8b8b8b]" />
          <svg className="mt-[41px] h-[11px] w-[14px]" viewBox="0 0 14 11"><path d="M1.500 0Q0 .5.500 2L5.500 9.500Q7 11.800 8.500 9.500L14 2V0z" fill="#8b8b8b" /></svg>
        </div>
      </div>
    </div>
  );
}
